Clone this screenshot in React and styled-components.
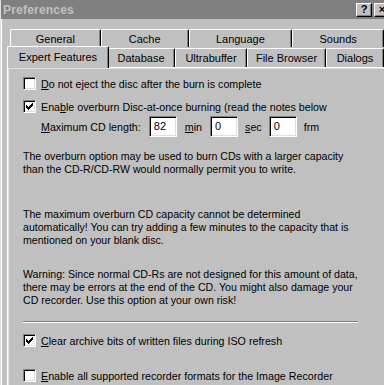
import styled, { createGlobalStyle } from 'styled-components'

const Global = createGlobalStyle`
  html, body {
    margin: 0;
    padding: 0;
    background: #c0c0c0;
  }
  body {
    font-family: "Liberation Sans", Arial, sans-serif;
    font-size: 10.7px;
    color: #000;
  }
`

const Window = styled.div`
  width: 384px;
  height: 385px;
  overflow: hidden;
  background: #c0c0c0;
  box-sizing: border-box;
  border-left: 1px solid #dfdfdf;
  padding-left: 1px;
  box-shadow: inset 1px 0 0 #ffffff;
`

const TitleBar = styled.div`
  height: 19px;
  background: #808080;
  display: flex;
  align-items: center;
  justify-content: space-between;
  padding: 0 0 0 2px;
  margin-left: -1px;
`

const Title = styled.span`
  color: #c0c0c0;
  font-weight: bold;
  font-size: 12px;
  letter-spacing: 0.2px;
`

const TitleButtons = styled.div`
  display: flex;
  gap: 2px;
  margin-right: -6px;
`

const TitleButton = styled.div`
  width: 16px;
  height: 14px;
  background: #c0c0c0;
  box-sizing: border-box;
  border-top: 1px solid #fff;
  border-left: 1px solid #fff;
  border-right: 1px solid #000;
  border-bottom: 1px solid #000;
  box-shadow: inset -1px -1px 0 #808080;
  display: flex;
  align-items: center;
  justify-content: center;
  font-weight: bold;
  font-size: 11px;
  line-height: 1;
`

const Body = styled.div`
  padding: 10px 0 0 5px;
`

const TabRow = styled.div`
  display: flex;
  align-items: flex-end;
  margin-left: ${p => p.$offset || 0}px;
  height: ${p => p.$height}px;
  position: relative;
  z-index: ${p => (p.$front ? 2 : 1)};
`

const Tab = styled.div`
  width: ${p => p.$w}px;
  height: ${p => (p.$active ? 22 : p.$h || 18)}px;
  box-sizing: border-box;
  background: #c0c0c0;
  border-top: 1px solid #fff;
  border-left: 1px solid #fff;
  border-right: 1px solid #000;
  border-top-left-radius: 2px;
  border-top-right-radius: 2px;
  box-shadow: inset -1px 0 0 #808080;
  display: flex;
  justify-content: center;
  padding-top: ${p => (p.$active ? 4 : 3)}px;
  font-size: 11px;
  margin: ${p => (p.$active ? '0 -2px -1px 0' : '0')};
  position: relative;
  z-index: ${p => (p.$active ? 3 : 1)};
`

const Panel = styled.div`
  position: relative;
  z-index: 1;
  border-top: 1px solid #fff;
  border-left: 1px solid #fff;
  box-shadow: inset 1px 1px 0 #dfdfdf;
  height: 330px;
  padding: 9px 0 0 15px;
`

const CheckRow = styled.div`
  display: flex;
  align-items: center;
  gap: 5px;
  height: 13px;
  margin-top: ${p => p.$mt || 0}px;
`

const Box = styled.div`
  width: 13px;
  height: 13px;
  box-sizing: border-box;
  background: #fff;
  border-top: 1px solid #808080;
  border-left: 1px solid #808080;
  border-right: 1px solid #fff;
  border-bottom: 1px solid #fff;
  box-shadow: inset 1px 1px 0 #000, inset -1px -1px 0 #dfdfdf;
  display: flex;
  align-items: center;
  justify-content: center;
`

const Label = styled.span`
  font-size: 10.7px;
  white-space: nowrap;
  u {
    text-decoration: underline;
    text-underline-offset: 1px;
  }
`

const LengthRow = styled.div`
  display: flex;
  align-items: center;
  margin-top: 3px;
  padding-left: 18px;
  height: 21px;
`

const Field = styled.div`
  width: 28px;
  height: 21px;
  box-sizing: border-box;
  background: #fff;
  border-top: 1px solid #808080;
  border-left: 1px solid #808080;
  border-right: 1px solid #fff;
  border-bottom: 1px solid #fff;
  box-shadow: inset 1px 1px 0 #000, inset -1px -1px 0 #dfdfdf;
  font-size: 11px;
  padding: 3px 0 0 4px;
  margin: 0 ${p => p.$mr}px 0 ${p => p.$ml}px;
`

const Para = styled.p`
  margin: ${p => p.$mt}px 0 0 0;
  font-size: 10.6px;
  line-height: 13px;
  white-space: nowrap;
`

const Separator = styled.div`
  margin: 14px 0 0 0;
  width: 335px;
  height: 0;
  border-top: 1px solid #808080;
  border-bottom: 1px solid #fff;
`

function Check({ checked }) {
  return (
    <Box>
      {checked && (
        <svg width="7" height="7" viewBox="0 0 7 7">
          <path d="M0 2h1v1h1v1h1V3h1V2h1V1h1V0h1v3H6v1H5v1H4v1H3v1H2V6H1V5H0z" fill="#000" />
        </svg>
      )}
    </Box>
  )
}

export default function App() {
  return (
    <Window>
      <Global />
      <TitleBar>
        <Title>Preferences</Title>
        <TitleButtons>
          <TitleButton>?</TitleButton>
          <TitleButton>×</TitleButton>
        </TitleButtons>
      </TitleBar>
      <Body>
        <TabRow $offset={3} $height={18}>
          <Tab $w={91}>General</Tab>
          <Tab $w={88}>Cache</Tab>
          <Tab $w={104}>Language</Tab>
          <Tab $w={92}>Sounds</Tab>
        </TabRow>
        <TabRow $height={20} $front>
          <Tab $w={102} $active>Expert Features</Tab>
          <Tab $w={68} $h={19}>Database</Tab>
          <Tab $w={72} $h={19}>Ultrabuffer</Tab>
          <Tab $w={79} $h={19}>File Browser</Tab>
          <Tab $w={58} $h={19}>Dialogs</Tab>
        </TabRow>
        <Panel>
          <CheckRow>
            <Check />
            <Label><u>D</u>o not eject the disc after the burn is complete</Label>
          </CheckRow>
          <CheckRow $mt={10}>
            <Check checked />
            <Label>Ena<u>b</u>le overburn Disc-at-once burning (read the notes below</Label>
          </CheckRow>
          <LengthRow>
            <Label><u>M</u>aximum CD length:</Label>
            <Field $ml={8} $mr={8}>82</Field>
            <Label><u>m</u>in</Label>
            <Field $ml={8} $mr={7}>0</Field>
            <Label><u>s</u>ec</Label>
            <Field $ml={7} $mr={7}>0</Field>
            <Label>frm</Label>
          </LengthRow>
          <Para $mt={13}>
            The overburn option may be used to burn CDs with a larger capacity<br />
            than the CD-R/CD-RW would normally permit you to write.
          </Para>
          <Para $mt={32}>
            The maximum overburn CD capacity cannot be determined<br />
            automatically! You can try adding a few minutes to the capacity that is<br />
            mentioned on your blank disc.
          </Para>
          <Para $mt={21}>
            Warning: Since normal CD-Rs are not designed for this amount of data,<br />
            there may be errors at the end of the CD. You might also damage your<br />
            CD recorder. Use this option at your own risk!
          </Para>
          <Separator />
          <CheckRow $mt={11}>
            <Check checked />
            <Label><u>C</u>lear archive bits of written files during ISO refresh</Label>
          </CheckRow>
          <CheckRow $mt={22}>
            <Check />
            <Label><u>E</u>nable all supported recorder formats for the Image Recorder</Label>
          </CheckRow>
        </Panel>
      </Body>
    </Window>
  )
}
